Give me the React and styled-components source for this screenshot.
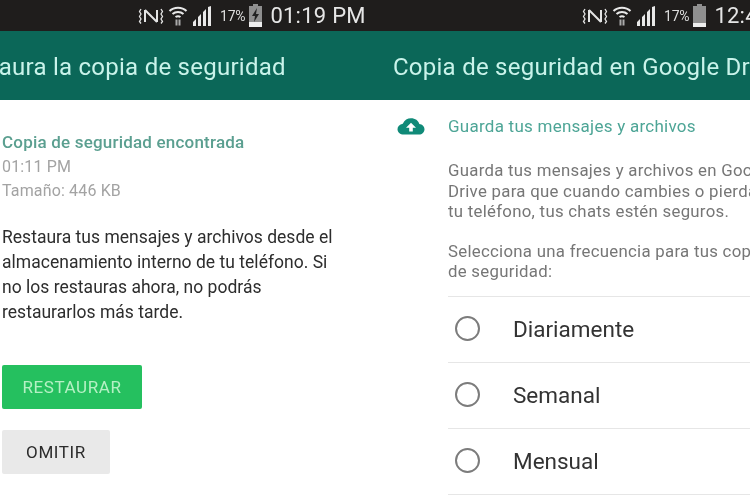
import React from "react";
import styled, { createGlobalStyle } from "styled-components";

const Global = createGlobalStyle`
  html, body { margin: 0; padding: 0; background: #fff; }
  body { font-family: Roboto, "Liberation Sans", sans-serif; }
`;
const Page = styled.div`
  width: 750px; height: 500px; overflow: hidden; display: grid;
  grid-template-columns: 385px 365px; background: #fff; filter: blur(0.4px);
`;
const Screen = styled.section`
  min-width: 0; overflow: hidden; display: flex; flex-direction: column; height: 500px;
`;
const StatusBar = styled.div`
  height: 31px; flex: none; background: #1f1d1c; display: flex; align-items: center;
  color: #e8e8e8; white-space: nowrap; padding-left: ${p => p.$left}px;
  svg { flex: none; display: block; }
`;
const Icons = styled.div`display: flex; align-items: center; gap: 4px;`;
const Pct = styled.span`font-size: 14px; letter-spacing: -.2px; color: #ddd; margin: 0 3px 0 8px; padding-top: 1px;`;
const Clock = styled.span`font-size: 22px; margin-left: 7px; color: #e6e6e6; letter-spacing: .25px;`;
const AppBar = styled.header`
  height: 69px; flex: none; background: #0b6758; display: flex; align-items: center;
  color: #c9f3ea; font-size: 24px; white-space: nowrap; letter-spacing: .25px;
`;
const Title = styled.h1`
  font: inherit; margin: 0 0 0 ${p => p.$left}px; padding-top: 2px;
`;
const LeftBody = styled.div`padding: 31px 0 0 2px; display: flex; flex-direction: column; align-items: flex-start;`;
const Found = styled.h2`margin: 0; padding-top: 1px; font-size: 17px; line-height: 20px; font-weight: 500; color: #5b9f90; letter-spacing: .2px;`;
const Meta = styled.div`font-size: 16px; line-height: 24px; color: #a3a3a3; margin-top: ${p => p.$top || 0}px; letter-spacing: .15px;`;
const Lead = styled.p`margin: 22px 0 0; font-size: 17.5px; line-height: 25px; color: #2d2d2d; white-space: nowrap; letter-spacing: .02px;`;
const Btn = styled.button`
  border: 0; padding: 0; font-family: inherit; font-size: 17px; display: block; border-radius: 2px;
  height: 44px; width: ${p => p.$w}px; background: ${p => p.$bg}; color: ${p => p.$fg};
  letter-spacing: .6px;
`;
const Actions = styled.div`display: flex; flex-direction: column; align-items: flex-start; gap: 21px; margin-top: 40px;`;
const RightBody = styled.div`padding: 15px 0 0 12px;`;
const Head = styled.div`display: flex; align-items: center; gap: 23px; height: 22px; white-space: nowrap;`;
const HeadText = styled.span`font-size: 17px; color: #4da596; letter-spacing: .25px;`;
const Copy = styled.p`
  margin: ${p => p.$top}px 0 0 51px; font-size: 16.8px; line-height: 20.5px; color: #767676;
  white-space: nowrap; letter-spacing: .28px;
`;
const List = styled.ul`list-style: none; margin: 14px 0 0 51px; padding: 0; border-top: 1px solid #e6e6e6;`;
const Item = styled.li`
  height: 65px; border-bottom: 1px solid #e6e6e6; display: flex; align-items: center;
  gap: 33px; padding-left: 7px; font-size: 22.5px; color: #333;
`;
const Radio = styled.span`
  width: 21px; height: 21px; border: 2px solid #7c7c7c; border-radius: 50%; flex: none; margin-top: -2px;
`;

const Signal = () => (
  <svg width="20" height="20" viewBox="0 0 20 20" fill="#e8e8e8">
    <path d="M1 16l3-3v7H1zM6 11l3-3v12H6zM11 6l3-3v17h-3zM16 1l3-1v20h-3z" />
  </svg>
);
const Wifi = () => (
  <svg width="20" height="22" viewBox="0 0 20 22" fill="none" stroke="#e8e8e8" strokeWidth="2">
    <path d="M1.500 6C6 1.500 14 1.500 18.500 6M4.500 9C7.500 6.200 12.500 6.200 15.500 9M7.500 12C9 11 11 11 12.500 12" />
    <path d="M7.500 14.500h2v6h-2zM10.500 14.500h2v6h-2z" fill="#aaa" stroke="none" />
  </svg>
);
const Nfc = () => (
  <svg width="26" height="20" viewBox="0 0 26 20" fill="none" stroke="#e4e4e4" strokeWidth="2">
    <path d="M7 4v12M7 4l12 12M19 4v12" />
    <path d="M3 3l-1.500 2.500 1.500 2.500-1.500 2.500 1.500 2.500-1.500 2.500 1.500 2M23 3l1.500 2.500-1.500 2.500 1.500 2.500-1.500 2.500 1.500 2.500-1.500 2" strokeWidth="1.300" />
  </svg>
);
const Battery = ({ charging }) => (
  <svg width="15" height="25" viewBox="0 0 15 25">
    <path d="M5 1h5v2h4v21H1V3h4z" fill="#8f8f8f" />
    <path d={charging ? "M1 19h13v5H1z" : "M1 20h13v4H1z"} fill="#eee" />
    {charging && <path d="M9 5 4 13h3l-1 6 5-8H8z" fill="#222" />}
  </svg>
);
const CloudUp = () => (
  <svg width="28" height="18" viewBox="0 0 28 20" preserveAspectRatio="none">
    <path d="M7 19.500C3 19.500.500 16.500.500 13.500.500 10.500 2.500 8 5.800 7.400 7.500 3.500 10.500 1.500 14 1.500c4.200 0 7.500 2.700 8.300 6.200 3 .3 5.200 2.700 5.200 5.800 0 3.300-2.500 6-5.500 6z" fill="#108a78" />
    <path d="M14 6.500 19 12h-3.200v4h-3.600v-4H9z" fill="#fff" />
  </svg>
);

export default function App() {
  return (
    <Page>
      <Global />
      <Screen>
        <StatusBar $left={138}>
          <Icons><Nfc /><Wifi /><Signal /></Icons>
          <Pct>17%</Pct>
          <Battery charging />
          <Clock>01:19 PM</Clock>
        </StatusBar>
        <AppBar><Title $left={-50}>Restaura la copia de seguridad</Title></AppBar>
        <LeftBody>
          <Found>Copia de seguridad encontrada</Found>
          <Meta $top={3}>01:11 PM</Meta>
          <Meta>Tamaño: 446 KB</Meta>
          <Lead>Restaura tus mensajes y archivos desde el<br />almacenamiento interno de tu teléfono. Si<br />no los restauras ahora, no podrás<br />restaurarlos más tarde.</Lead>
          <Actions>
            <Btn $w={140} $bg="#25c05f" $fg="#b5f0c4">RESTAURAR</Btn>
            <Btn $w={108} $bg="#e9e9e9" $fg="#2b2b2b">OMITIR</Btn>
          </Actions>
        </LeftBody>
      </Screen>
      <Screen>
        <StatusBar $left={197}>
          <Icons><Nfc /><Wifi /><Signal /></Icons>
          <Pct>17%</Pct>
          <Battery />
          <Clock>12:4</Clock>
        </StatusBar>
        <AppBar><Title $left={8}>Copia de seguridad en Google Drive</Title></AppBar>
        <RightBody>
          <Head><CloudUp /><HeadText>Guarda tus mensajes y archivos</HeadText></Head>
          <Copy $top={23}>Guarda tus mensajes y archivos en Google<br />Drive para que cuando cambies o pierdas<br />tu teléfono, tus chats estén seguros.</Copy>
          <Copy $top={19}>Selecciona una frecuencia para tus copias<br />de seguridad:</Copy>
          <List>
            <Item><Radio />Diariamente</Item>
            <Item><Radio />Semanal</Item>
            <Item><Radio />Mensual</Item>
          </List>
        </RightBody>
      </Screen>
    </Page>
  );
}
